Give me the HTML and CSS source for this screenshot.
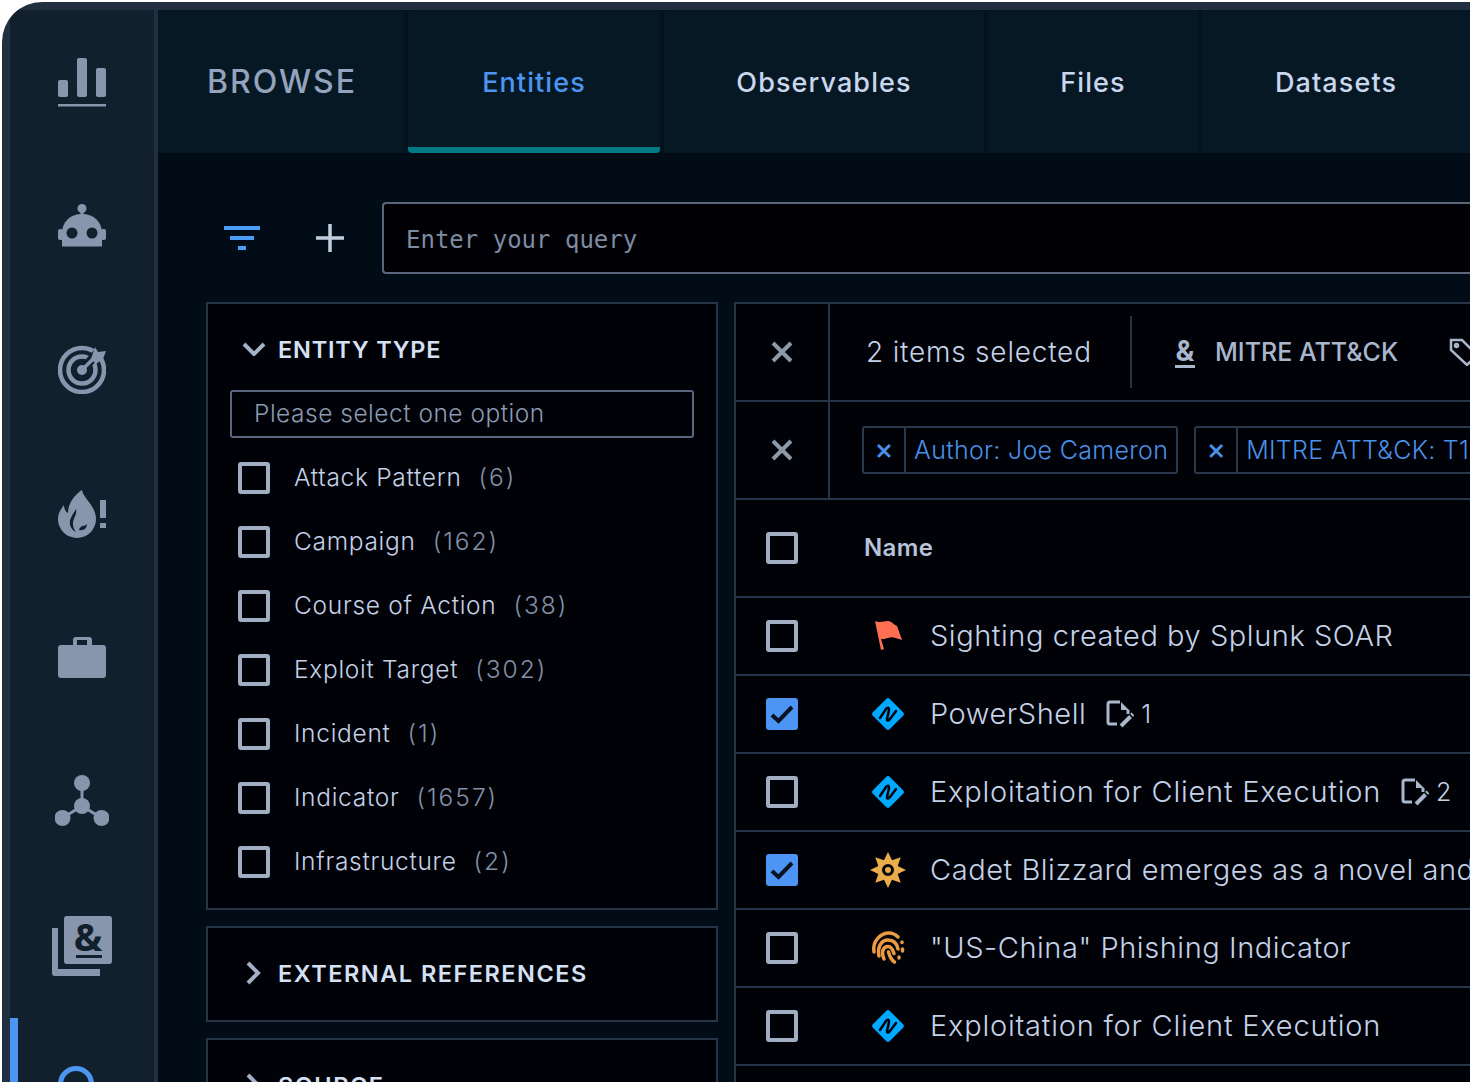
FILE: index.html
```html
<!DOCTYPE html>
<html>

<head>
    <title>Browse</title>
    <link rel="stylesheet" href="styles.css">
</head>

<body>
    <div class="frame">
        <nav class="sidebar">
            <div class="nav-slot">
                <svg width="48" height="49" viewBox="0 0 48 49"><rect y="22" width="10" height="17" rx="2"/><rect x="19" width="10" height="39" rx="2"/><rect x="38" y="10" width="10" height="29" rx="2"/><rect y="46" width="48" height="2.5"/></svg>
            </div>
            <div class="nav-slot nudge">
                <svg width="48" height="43" viewBox="0 0 48 43"><circle cx="24" cy="4.5" r="4.5"/><rect x="22.5" y="6" width="3" height="6"/><path d="M4 42.5V29C4 18 12 10 24 10s20 8 20 19v13.500z"/><rect y="25" width="5" height="11" rx="2"/><rect x="43" y="25" width="5" height="11" rx="2"/><circle class="cut" cx="14" cy="29" r="5.500"/><circle class="cut" cx="34" cy="29" r="5.500"/></svg>
            </div>
            <div class="nav-slot nudge">
                <svg width="48" height="49" viewBox="0 0 48 49"><g class="rings"><circle cx="24" cy="25" r="22"/><circle cx="24" cy="25" r="13.500"/></g><path class="cut-line" d="M24 25L46 1"/><circle cx="24" cy="25" r="5"/><path class="arrow-line" d="M24 25L38 11"/><path d="M33 14L37 2l3 5 8-1-3 8-7 5z"/></svg>
            </div>
            <div class="nav-slot">
                <svg width="48" height="48" viewBox="0 0 48 48"><path d="M24 0c1 8 14 16 14 29a19 19 0 0 1-38 0c0-6 3-10 6-14 0 4 2 7 4 8C10 14 16 5 24 0z"/><path class="cut" d="M18 19c-3 6-7 9-6 16 1 3 3 6 6 7-3-4-4-9-2-13 1-3 3-6 2-10zM21 40c5 1 8-2 8-6-2 2-4 2-5 2-1 1-3 2-3 4z"/><rect x="42" y="10" width="6" height="18"/><rect x="42" y="33" width="6" height="5"/></svg>
            </div>
            <div class="nav-slot nudge">
                <svg width="48" height="42" viewBox="0 0 48 42"><path d="M15 9V4q0-3 3-3h13q3 0 3 3v5h-5V4H19v5z"/><rect y="9" width="48" height="33" rx="3"/></svg>
            </div>
            <div class="nav-slot nudge-more">
                <svg width="54" height="51" viewBox="0 0 54 51"><path class="net-line" d="M27 8V31L7.500 43M27 31l19.500 12"/><circle cx="27" cy="8" r="8"/><circle cx="27" cy="31" r="8"/><circle cx="7.500" cy="43" r="8"/><circle cx="46.500" cy="43" r="8"/></svg>
            </div>
            <div class="nav-slot">
                <svg width="60" height="60" viewBox="0 0 60 60"><path d="M0 12h6v41h42v7H3q-3 0-3-3z"/><rect x="12" width="48" height="48" rx="3"/><text class="amp" x="36" y="35" text-anchor="middle">&amp;</text><rect class="cut" x="24" y="39" width="26" height="3"/></svg>
            </div>
            <div class="nav-slot active">
                <svg width="48" height="48" viewBox="0 0 48 48"><circle class="lens" cx="18" cy="18" r="15.500"/><path class="lens" d="M30 30l15 15"/></svg>
            </div>
        </nav>

        <main class="main">
            <div class="tabs">
                <div class="tab tab-title">BROWSE</div>
                <div class="tab tab-entities">Entities</div>
                <div class="tab tab-observables">Observables</div>
                <div class="tab tab-files">Files</div>
                <div class="tab tab-datasets">Datasets</div>
            </div>

            <div class="content">
                <div class="search-row">
                    <svg class="filter-icon" width="36" height="24" viewBox="0 0 36 24"><rect width="36" height="4"/><rect x="6" y="10" width="24" height="4"/><rect x="14" y="20" width="8" height="4"/></svg>
                    <svg class="plus-icon" width="28" height="28" viewBox="0 0 28 28"><path d="M14 0V28M0 14H28"/></svg>
                    <div class="query">Enter your query</div>
                </div>

                <div class="columns">
                    <div class="filters">
                        <section class="panel">
                            <h3 class="panel-head">
                                <svg class="chevron" width="24" height="14" viewBox="0 0 24 14"><path d="M2 2l10 10L22 2"/></svg>
                                ENTITY TYPE
                            </h3>
                            <div class="select">Please select one option</div>
                            <ul class="options">
                                <li class="option"><span class="box"></span><span class="option-name">Attack Pattern</span><span class="count">(6)</span></li>
                                <li class="option"><span class="box"></span><span class="option-name">Campaign</span><span class="count">(162)</span></li>
                                <li class="option"><span class="box"></span><span class="option-name">Course of Action</span><span class="count">(38)</span></li>
                                <li class="option"><span class="box"></span><span class="option-name">Exploit Target</span><span class="count">(302)</span></li>
                                <li class="option"><span class="box"></span><span class="option-name">Incident</span><span class="count">(1)</span></li>
                                <li class="option"><span class="box"></span><span class="option-name">Indicator</span><span class="count">(1657)</span></li>
                                <li class="option"><span class="box"></span><span class="option-name">Infrastructure</span><span class="count">(2)</span></li>
                            </ul>
                        </section>
                        <section class="panel panel-closed">
                            <h3 class="panel-head">
                                <svg class="chevron chevron-right" width="16" height="24" viewBox="0 0 16 24"><path d="M3 2l10 10L3 22"/></svg>
                                EXTERNAL REFERENCES
                            </h3>
                        </section>
                        <section class="panel panel-closed">
                            <h3 class="panel-head">
                                <svg class="chevron chevron-right" width="16" height="24" viewBox="0 0 16 24"><path d="M3 2l10 10L3 22"/></svg>
                                SOURCE
                            </h3>
                        </section>
                    </div>

                    <div class="results">
                        <div class="bar">
                            <div class="bar-close"><svg class="x-icon" width="22" height="22" viewBox="0 0 22 22"><path d="M2 2l18 18M20 2L2 20"/></svg></div>
                            <div class="selected-count">2 items selected</div>
                            <div class="bar-divider"></div>
                            <div class="bar-action"><span class="amp-mark">&amp;</span>MITRE ATT&amp;CK</div>
                            <svg class="tag-icon" width="30" height="28" viewBox="0 0 30 28"><path d="M2 2h11l15 15-10 10L2 12z"/><circle cx="7.500" cy="7.500" r="1.500"/></svg>
                        </div>
                        <div class="bar">
                            <div class="bar-close"><svg class="x-icon" width="22" height="22" viewBox="0 0 22 22"><path d="M2 2l18 18M20 2L2 20"/></svg></div>
                            <div class="chips">
                                <div class="chip"><span class="chip-x">×</span><span class="chip-text">Author: Joe Cameron</span></div>
                                <div class="chip"><span class="chip-x">×</span><span class="chip-text">MITRE ATT&amp;CK: T1204</span></div>
                            </div>
                        </div>
                        <div class="row row-head"><span class="box"></span><span class="col-name">Name</span></div>

                        <div class="row">
                            <span class="box"></span>
                            <svg class="row-icon" width="36" height="32" viewBox="0 0 36 32"><path class="flag" d="M5 1C10 3 14 1 18 1c3 0 5 3 9 5l5 14c-6-2-10-4-14-2-3 1-5 1-7 1l3 10-3 1z"/></svg>
                            <span class="row-name">Sighting created by Splunk SOAR</span>
                        </div>
                        <div class="row">
                            <span class="box box-on"><svg width="26" height="26" viewBox="0 0 26 26"><path d="M3 14l6.500 6L23 6"/></svg></span>
                            <svg class="row-icon" width="36" height="34" viewBox="0 0 36 34"><rect class="diamond" x="6" y="5" width="24" height="24" rx="3" transform="rotate(45 18 17)"/><path class="diamond-line" d="M10 21L16 12Q19 9 19 13L17 22Q17 25 20 22L26 14"/></svg>
                            <span class="row-name">PowerShell</span>
                            <span class="note"><svg width="28" height="28" viewBox="0 0 28 28"><path class="note-line" d="M14 2H4Q2 2 2 4V22Q2 24 4 24H11M22 10V14"/><path class="note-fold" d="M15 2L23 10H15z"/><path class="note-pen" d="M27 14L15 26"/></svg>1</span>
                        </div>
                        <div class="row">
                            <span class="box"></span>
                            <svg class="row-icon" width="36" height="34" viewBox="0 0 36 34"><rect class="diamond" x="6" y="5" width="24" height="24" rx="3" transform="rotate(45 18 17)"/><path class="diamond-line" d="M10 21L16 12Q19 9 19 13L17 22Q17 25 20 22L26 14"/></svg>
                            <span class="row-name row-name-wide">Exploitation for Client Execution</span>
                            <span class="note"><svg width="28" height="28" viewBox="0 0 28 28"><path class="note-line" d="M14 2H4Q2 2 2 4V22Q2 24 4 24H11M22 10V14"/><path class="note-fold" d="M15 2L23 10H15z"/><path class="note-pen" d="M27 14L15 26"/></svg>2</span>
                        </div>
                        <div class="row">
                            <span class="box box-on"><svg width="26" height="26" viewBox="0 0 26 26"><path d="M3 14l6.500 6L23 6"/></svg></span>
                            <svg class="row-icon" width="36" height="36" viewBox="0 0 36 36"><path class="sun" d="M18 0L22 8.300 30.700 5.300 27.700 14 36 18 27.700 22 30.700 30.700 22 27.700 18 36 14 27.700 5.300 30.700 8.300 22 0 18 8.300 14 5.300 5.300 14 8.300z"/><circle class="sun-ring" cx="18" cy="18" r="4.500"/></svg>
                            <span class="row-name">Cadet Blizzard emerges as a novel and distinct threat actor</span>
                        </div>
                        <div class="row">
                            <span class="box"></span>
                            <svg class="row-icon" width="36" height="34" viewBox="0 0 36 34"><g class="print"><path d="M4 21C2 10 11 2 19 2c4 0 7 2 9 4"/><path d="M32 11v.500"/><path d="M9 25C7 15 12 9 18 9c6 0 9 4 10 9"/><path d="M14 28C11 21 13 15.500 18 15.500c4 0 5 4 6 7"/><path d="M18.500 21c1 4 3 8 6 10"/><path d="M32.500 18v2"/><path d="M29 26v1"/></g></svg>
                            <span class="row-name">"US-China" Phishing Indicator</span>
                        </div>
                        <div class="row">
                            <span class="box"></span>
                            <svg class="row-icon" width="36" height="34" viewBox="0 0 36 34"><rect class="diamond" x="6" y="5" width="24" height="24" rx="3" transform="rotate(45 18 17)"/><path class="diamond-line" d="M10 21L16 12Q19 9 19 13L17 22Q17 25 20 22L26 14"/></svg>
                            <span class="row-name row-name-wide">Exploitation for Client Execution</span>
                        </div>
                    </div>
                </div>
            </div>
        </main>
    </div>
</body>

</html>
```

FILE: styles.css
```css
html,
body {
    margin: 0;
    height: 100%;
    overflow: hidden;
    background: #fff;
}

body {
    font-family: Inter, "Noto Sans", sans-serif;
    color: #c5d1e6;
}

.frame {
    display: flex;
    gap: 4px;
    box-sizing: border-box;
    width: 1468px;
    height: 1080px;
    margin: 2px 0 0 2px;
    padding: 8px 0 0 8px;
    overflow: hidden;
    background: #222f40;
    border-radius: 40px 0 0 0;
}

/* left nav */
.sidebar {
    flex: none;
    width: 144px;
    background: #12202e;
}

.nav-slot {
    position: relative;
    display: flex;
    align-items: center;
    justify-content: center;
    height: 144px;
}

.nav-slot svg {
    fill: #8796ad;
}

.nudge svg {
    margin-bottom: 2px;
}

.nudge-more svg {
    margin-bottom: 4px;
}

.nav-slot .cut {
    fill: #12202e;
}

.nav-slot .amp {
    font: 700 38px "Noto Sans", sans-serif;
    fill: #12202e;
}

.rings {
    fill: none;
    stroke: #8796ad;
    stroke-width: 4.5;
}

.cut-line {
    fill: none;
    stroke: #12202e;
    stroke-width: 9;
}

.arrow-line {
    fill: none;
    stroke: #8796ad;
    stroke-width: 3.5;
}

.net-line {
    fill: none;
    stroke: #8796ad;
    stroke-width: 3;
}

.active::before {
    content: "";
    position: absolute;
    left: 0;
    top: 0;
    bottom: 0;
    width: 8px;
    background: #4c95f0;
}

.lens {
    fill: none;
    stroke: #4c95f0;
    stroke-width: 5;
}

/* main area */
.main {
    flex: 1;
    min-width: 0;
    display: flex;
    flex-direction: column;
    overflow: hidden;
    background: #010c16;
}

.tabs {
    flex: none;
    display: flex;
    gap: 4px;
    height: 143px;
    background: #04121d;
}

.tab {
    flex: none;
    display: flex;
    align-items: center;
    justify-content: center;
    box-sizing: border-box;
    padding-top: 2px;
    background: #071825;
    border-radius: 4px 4px 0 0;
    font-size: 27px;
    font-weight: 500;
    letter-spacing: 1.1px;
    color: #c9d6ec;
}

.tab-title {
    width: 246px;
    justify-content: flex-start;
    padding: 0 0 0 49px;
    font-size: 32px;
    font-weight: 500;
    letter-spacing: 2px;
    color: #94a3be;
}

.tab-entities {
    width: 252px;
    padding-top: 8px;
    color: #4c95f0;
    border-bottom: 6px solid #007a85;
    border-radius: 4px;
}

.tab-observables {
    width: 320px;
}

.tab-files {
    width: 210px;
}

.tab-datasets {
    flex: 1;
    min-width: 268px;
}

.content {
    flex: 1;
    padding: 49px 0 0 48px;
}

.search-row {
    display: flex;
    align-items: center;
    height: 72px;
}

.filter-icon {
    flex: none;
    margin-left: 18px;
    fill: #4c9df5;
}

.plus-icon {
    flex: none;
    margin-left: 56px;
    fill: none;
    stroke: #c2cde0;
    stroke-width: 3.5;
}

.query {
    flex: 1;
    box-sizing: border-box;
    height: 72px;
    margin-left: 38px;
    padding-left: 22px;
    line-height: 72px;
    border: 2px solid #59667c;
    border-right: none;
    border-radius: 4px 0 0 4px;
    background: #000005;
    font-family: "DejaVu Sans Mono", monospace;
    font-size: 24px;
    color: #7e8ba1;
}

.columns {
    display: flex;
    gap: 16px;
    margin-top: 28px;
}

/* filter column */
.filters {
    flex: none;
    width: 512px;
    display: flex;
    flex-direction: column;
    gap: 16px;
}

.panel {
    border: 2px solid #263447;
    background: #000208;
    padding-bottom: 14px;
}

.panel-closed {
    height: 96px;
    box-sizing: border-box;
    padding-bottom: 0;
}

.panel-head {
    display: flex;
    align-items: center;
    height: 86px;
    margin: 0;
    padding: 4px 0 0 34px;
    box-sizing: border-box;
    font-size: 23.5px;
    font-weight: 600;
    letter-spacing: 0.8px;
    color: #d5e0f2;
}

.panel-closed .panel-head {
    height: 92px;
    padding: 0 0 2px 37px;
    letter-spacing: 1.5px;
}

.chevron {
    flex: none;
    margin-right: 12px;
    fill: none;
    stroke: #a3b0c6;
    stroke-width: 4;
}

.chevron-right {
    margin-right: 17px;
}

.select {
    box-sizing: border-box;
    height: 48px;
    margin: 0 22px;
    padding-left: 22px;
    line-height: 42px;
    border: 2px solid #59667c;
    border-radius: 3px;
    font-size: 24.5px;
    font-weight: 300;
    letter-spacing: 0.5px;
    color: #8c9ab1;
}

.options {
    list-style: none;
    margin: 8px 0 0;
    padding: 0 0 0 30px;
}

.option {
    display: flex;
    align-items: center;
    height: 64px;
    font-size: 24.5px;
    font-weight: 300;
}

.option-name {
    padding-bottom: 2px;
    letter-spacing: 0.7px;
}

.count {
    margin-left: 17px;
    padding-bottom: 2px;
    letter-spacing: 2px;
    color: #8491a5;
}

.box {
    flex: none;
    box-sizing: border-box;
    display: inline-block;
    width: 32px;
    height: 32px;
    margin-right: 24px;
    border: 4px solid #a0adc2;
    border-radius: 3px;
}

.box-on {
    background: #4c95f5;
    border-color: #4c95f5;
}

.box-on svg {
    display: block;
    margin: -1px;
    fill: none;
    stroke: #0a1420;
    stroke-width: 4;
}

/* results table */
.results {
    flex: none;
    width: 900px;
    border: 2px solid #263447;
    background: #000208;
}

.bar {
    display: flex;
    align-items: center;
    height: 98px;
    box-sizing: border-box;
    border-bottom: 2px solid #263447;
}

.bar-close {
    flex: none;
    display: flex;
    align-items: center;
    justify-content: center;
    width: 92px;
    height: 96px;
    border-right: 2px solid #263447;
}

.x-icon {
    fill: none;
    stroke: #8e99a8;
    stroke-width: 4;
}

.selected-count {
    width: 225px;
    margin-left: 36px;
    font-size: 28px;
    font-weight: 300;
    letter-spacing: 0.8px;
    white-space: nowrap;
}

.bar-divider {
    width: 2px;
    height: 72px;
    margin: 0 43px 0 39px;
    background: #263447;
}

.bar-action {
    display: flex;
    align-items: center;
    white-space: nowrap;
    font-size: 25px;
    font-weight: 500;
    color: #a9b6cc;
}

.amp-mark {
    width: 20px;
    margin-right: 20px;
    text-align: center;
    font-size: 28px;
    font-weight: 700;
    line-height: 28px;
    border-bottom: 3px solid #a9b6cc;
}

.tag-icon {
    flex: none;
    margin-left: 51px;
    fill: none;
    stroke: #a9b6cc;
    stroke-width: 2.500;
}

.chips {
    display: flex;
    gap: 16px;
    margin-left: 32px;
}

.chip {
    display: flex;
    height: 48px;
    box-sizing: border-box;
    border: 2px solid #2a384b;
    border-radius: 3px;
    color: #4a90e6;
    font-size: 25px;
    font-weight: 300;
    white-space: nowrap;
}

.chip-x {
    width: 40px;
    text-align: center;
    font-size: 29px;
    font-weight: 500;
    line-height: 42px;
    border-right: 2px solid #2a384b;
}

.chip-text {
    padding: 0 8px;
    line-height: 44px;
    letter-spacing: 0.3px;
}

.row {
    display: flex;
    align-items: center;
    height: 78px;
    box-sizing: border-box;
    padding-left: 30px;
    border-bottom: 2px solid #263447;
    white-space: nowrap;
}

.row-head {
    height: 98px;
}

.row .box {
    margin-right: 72px;
}

.row-head .box {
    margin-right: 66px;
}

.col-name {
    padding-bottom: 2px;
    font-size: 24px;
    font-weight: 600;
    letter-spacing: 0.4px;
    color: #b6c3d9;
}

.row-icon {
    flex: none;
    margin-right: 24px;
}

.row-name {
    padding-bottom: 2px;
    font-size: 29px;
    font-weight: 300;
    letter-spacing: 0.55px;
}

.row-name-wide {
    letter-spacing: 0.77px;
}

.flag {
    fill: #ff6f52;
}

.diamond {
    fill: #00a8ff;
}

.diamond-line {
    fill: none;
    stroke: #000208;
    stroke-width: 2.500;
    stroke-linecap: round;
}

.sun {
    fill: #e8ad4a;
}

.sun-ring {
    fill: #e8ad4a;
    stroke: #000208;
    stroke-width: 3;
}

.print {
    fill: none;
    stroke: #ec9a42;
    stroke-width: 3.500;
    stroke-linecap: round;
}

.note {
    display: flex;
    align-items: center;
    gap: 7px;
    margin-left: 20px;
    font-size: 25px;
    font-weight: 300;
}

.note-line {
    fill: none;
    stroke: #a9b6cc;
    stroke-width: 3;
}

.note-fold {
    fill: #a9b6cc;
}

.note-pen {
    fill: none;
    stroke: #a9b6cc;
    stroke-width: 4;
    stroke-dasharray: 2 1.500 20;
}
```
